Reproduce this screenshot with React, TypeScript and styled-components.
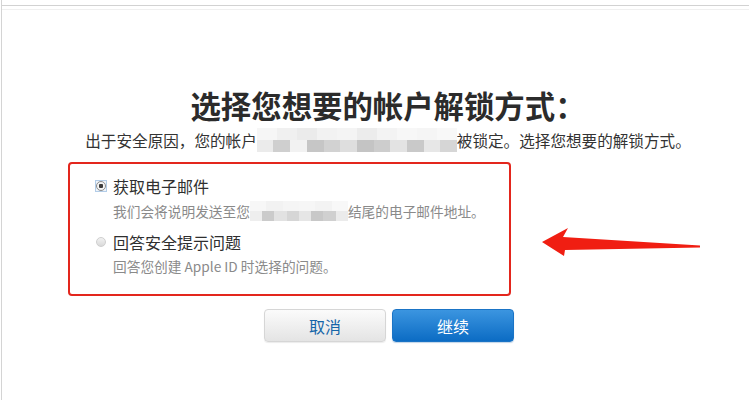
import React from 'react';
import styled, { createGlobalStyle } from 'styled-components';

const GlobalStyle = createGlobalStyle`
    html, body {
        margin: 0;
        padding: 0;
        background: #ffffff;
    }
    body {
        font-family: "Noto Sans CJK SC", "Liberation Sans", sans-serif;
        color: #333333;
    }
`

const Page = styled.div`
    position: relative;
    width: 749px;
    height: 400px;
    box-sizing: border-box;
    border-left: 1px solid #d4d4d4;
    margin-left: 1px;
    overflow: hidden;
`

const TopRule = styled.div`
    height: 4px;
    border-bottom: 1px solid #f0f0f0;
    &::after{
        content: "";
        display: block;
        margin-top: 5px;
        border-top: 1px solid #d2d2d2;
    }
`

const Content = styled.div`
    display: flex;
    flex-direction: column;
    align-items: center;
    width: 648px;
    margin-left: 62px;
    padding-top: 77px;
`

const Title = styled.h1`
    margin: 0;
    font-size: 30.4px;
    line-height: 36px;
    font-weight: 700;
    color: #2b2b2b;
    letter-spacing: 0;
`

const Subtitle = styled.p`
    margin: 5px 0 0;
    font-size: 15.6px;
    line-height: 20px;
    color: #333333;
    display: flex;
    align-items: center;
    white-space: nowrap;
`

const Form = styled.div`
    align-self: flex-start;
    margin-left: 4px;
    width: 443px;
    display: flex;
    flex-direction: column;
`

const OptionBox = styled.div`
    margin-top: 10px;
    height: 134px;
    box-sizing: border-box;
    border: 2.5px solid #e3261d;
    border-radius: 4px;
    padding: 12px 0 0 25px;
    display: flex;
    flex-direction: column;
`

const Option = styled.label<{ $first?: boolean }>`
    display: grid;
    grid-template-columns: 12px auto;
    column-gap: 6px;
    margin-top: ${p => p.$first ? '0' : '11px'};
`

const RadioWrap = styled.span<{ $focus?: boolean }>`
    width: 12px;
    height: 12px;
    margin-top: 4px;
    display: flex;
    align-items: center;
    justify-content: center;
    box-sizing: border-box;
    border: 1px solid ${p => p.$focus ? '#b3cde8' : 'transparent'};
    background: ${p => p.$focus ? '#eef4fb' : 'transparent'};
`

const Radio = styled.span<{ $checked?: boolean }>`
    width: 10px;
    height: 10px;
    border-radius: 50%;
    box-sizing: border-box;
    border: 1px solid ${p => p.$checked ? '#8c8c8c' : '#cfcfcf'};
    background: ${p => p.$checked
        ? 'radial-gradient(circle, #3c3c3c 0 2px, #f4f4f4 2.5px)'
        : 'linear-gradient(#f2f2f2, #d9d9d9)'};
`

const OptionTitle = styled.span`
    font-size: 16px;
    line-height: 20px;
    color: #2f2f2f;
`

const OptionText = styled.span`
    grid-column: 2;
    margin-top: 5px;
    font-size: 13.7px;
    line-height: 18px;
    color: #8a8a8a;
    display: flex;
    align-items: center;
    white-space: nowrap;
`

const Mosaic = styled.span<{ $w: number; $h: number }>`
    display: inline-flex;
    flex-direction: column;
    width: ${p => p.$w}px;
    height: ${p => p.$h}px;
    filter: blur(0.5px);
`

const MosaicRow = styled.span`
    display: flex;
    flex: 1;
`

const Tile = styled.span`
    display: block;
    height: 100%;
`

const Buttons = styled.div`
    display: flex;
    justify-content: flex-end;
    gap: 6px;
    margin-top: 13px;
    margin-right: -3px;
`

const Button = styled.button<{ $primary?: boolean }>`
    width: 122px;
    height: 33px;
    border-radius: 4px;
    font-family: "Noto Sans CJK SC", "Liberation Sans", sans-serif;
    font-size: 16px;
    cursor: pointer;
    border: 1px solid ${p => p.$primary ? '#1a74c6' : '#d6d6d6'};
    color: ${p => p.$primary ? '#ffffff' : '#1565a8'};
    background: ${p => p.$primary
        ? 'linear-gradient(#3b95e0, #0c6cc4)'
        : 'linear-gradient(#fbfbfb, #e4e4e4)'};
    box-shadow: ${p => p.$primary ? '0 1px 1px rgba(0,80,160,0.25)' : '0 1px 1px rgba(0,0,0,0.08)'};
`

const Arrow = styled.svg`
    position: absolute;
    left: 536px;
    top: 224px;
`

// 모자이크 처리된 부분 (회색 블록)
const subtitleTiles = [
    ['#f6f6f6', '#f0f0f0', '#ebebeb', '#f2f2f2', '#f4f4f4', '#ececec', '#f3f3f3', '#f7f7f7', '#f5f5f5', '#f8f8f8'],
    ['#ebebeb', '#cfcfcf', '#f2f2f2', '#c6c6c6', '#d2d2d2', '#dedede', '#c4c4c4', '#cdcdcd', '#e3e3e3', '#c9c9c9', '#e7e7e7', '#d6d6d6'],
]
const emailTiles = [
    ['#f7f7f7', '#f2f2f2', '#f5f5f5', '#f6f6f6', '#f3f3f3', '#f8f8f8'],
    ['#eeeeee', '#cbcbcb', '#e2e2e2', '#d6d6d6', '#e6e6e6', '#c8c8c8', '#d0d0d0', '#ebebeb'],
]

function Blur({ w, h, rows }: { w: number; h: number; rows: string[][] }) {
    return (
        <Mosaic $w={w} $h={h}>
            {rows.map((row, i) => (
                <MosaicRow key={i}>
                    {row.map((c, j) => <Tile key={j} style={{ background: c, flex: 1 }} />)}
                </MosaicRow>
            ))}
        </Mosaic>
    )
}

export default function App() {
    return (
        <Page>
            <GlobalStyle />
            <TopRule />
            <Content>
                <Title>选择您想要的帐户解锁方式：</Title>
                <Subtitle>
                    出于安全原因，您的帐户
                    <Blur w={200} h={24} rows={subtitleTiles} />
                    被锁定。选择您想要的解锁方式。
                </Subtitle>
                <Form>
                    <OptionBox>
                        <Option $first>
                            <RadioWrap $focus><Radio $checked /></RadioWrap>
                            <OptionTitle>获取电子邮件</OptionTitle>
                            <OptionText>
                                我们会将说明发送至您
                                <Blur w={98} h={20} rows={emailTiles} />
                                结尾的电子邮件地址。
                            </OptionText>
                        </Option>
                        <Option>
                            <RadioWrap><Radio /></RadioWrap>
                            <OptionTitle>回答安全提示问题</OptionTitle>
                            <OptionText>回答您创建 Apple ID 时选择的问题。</OptionText>
                        </Option>
                    </OptionBox>
                    <Buttons>
                        <Button>取消</Button>
                        <Button $primary>继续</Button>
                    </Buttons>
                </Form>
            </Content>
            <Arrow width="166" height="36" viewBox="536 224 166 36">
                <polygon
                    points="540,242 566,228 561,237 698,245.5 698,247.5 563,250 562,256"
                    fill="#f01e12"
                />
            </Arrow>
        </Page>
    )
}
